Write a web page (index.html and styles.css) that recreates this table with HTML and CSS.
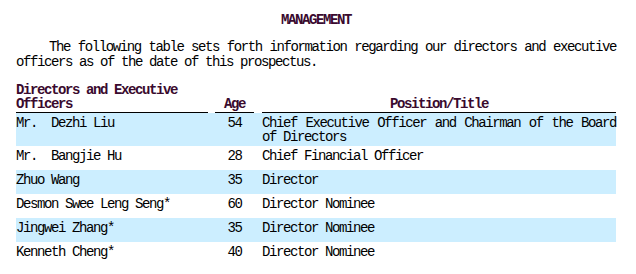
FILE: index.html
```html
<!DOCTYPE html>
<html>
<head>
<meta charset="utf-8">
<link rel="stylesheet" href="styles.css">
</head>
<body>
<div class="page">
  <h1 class="title">MANAGEMENT</h1>
  <p class="intro">The following table sets forth information regarding our directors and executive officers as of the date of this prospectus.</p>
  <table class="mgmt">
    <colgroup>
      <col class="c-name"><col class="c-age"><col class="c-pos">
    </colgroup>
    <thead>
      <tr>
        <th class="h-name"><div class="rule">Directors and Executive Officers</div></th>
        <th class="h-age"><div class="rule">Age</div></th>
        <th class="h-pos"><div class="rule">Position/Title</div></th>
      </tr>
    </thead>
    <tbody>
      <tr class="shade tall"><td>Mr.&nbsp; Dezhi Liu</td><td class="age">54</td><td class="pos">Chief Executive Officer and Chairman of the Board of Directors</td></tr>
      <tr><td>Mr.&nbsp; Bangjie Hu</td><td class="age">28</td><td class="pos">Chief Financial Officer</td></tr>
      <tr class="shade"><td>Zhuo Wang</td><td class="age">35</td><td class="pos">Director</td></tr>
      <tr><td>Desmon Swee Leng Seng*</td><td class="age">60</td><td class="pos">Director Nominee</td></tr>
      <tr class="shade"><td>Jingwei Zhang*</td><td class="age">35</td><td class="pos">Director Nominee</td></tr>
      <tr><td>Kenneth Cheng*</td><td class="age">40</td><td class="pos">Director Nominee</td></tr>
    </tbody>
  </table>
</div>
</body>
</html>
```

FILE: styles.css
```css
html, body {
  margin: 0;
  padding: 0;
  background: #ffffff;
}
body {
  font-family: "Liberation Mono", "DejaVu Sans Mono", monospace;
  font-size: 14px;
  letter-spacing: -1.4px;
  color: #000000;
}
.page {
  width: 600px;
  padding: 13px 16px 0 16px;
}
.title {
  margin: 0;
  font-size: 14px;
  line-height: 15px;
  font-weight: bold;
  text-align: center;
  color: #3a0a2e;
}
.intro {
  margin: 12px 0 0 0;
  line-height: 15px;
  text-indent: 33px;
  text-align: justify;
}
.mgmt {
  margin-top: 13px;
  width: 600px;
  border-collapse: collapse;
  table-layout: fixed;
}
.c-name { width: 199px; }
.c-age { width: 47px; }
.c-pos { width: 354px; }
.mgmt th {
  padding: 0;
  vertical-align: bottom;
  font-weight: bold;
  color: #3a0a2e;
  line-height: 14px;
}
.mgmt th .rule {
  border-bottom: 1px solid #000000;
  padding-bottom: 1px;
}
.h-name { text-align: left; padding-right: 7px !important; }
.h-age { text-align: center; padding-right: 8px !important; }
.h-pos { text-align: center; }
.mgmt td {
  padding: 3px 0 0 0;
  vertical-align: top;
  line-height: 14px;
}
.mgmt tbody tr { height: 24px; }
.mgmt tbody tr.tall { height: 33px; }
.mgmt tr.shade { background: #cceeff; }
.mgmt td.age {
  text-align: center;
  padding-right: 8px;
}
.mgmt td.pos {
  text-align: justify;
}
```
